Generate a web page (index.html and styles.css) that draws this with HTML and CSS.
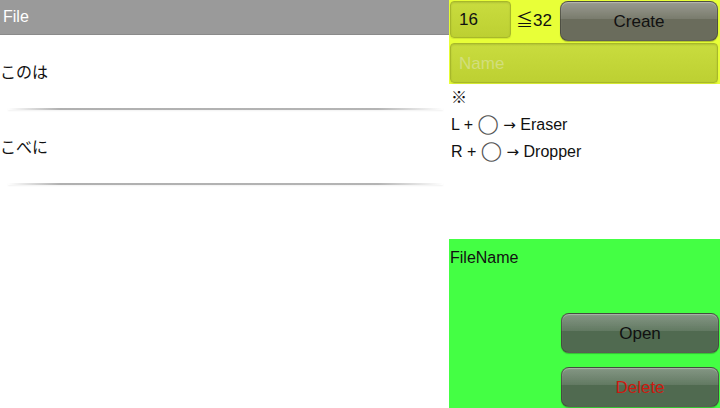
FILE: index.html
```html
<!DOCTYPE html>
<html>
<head>
<meta charset="utf-8">
<link rel="stylesheet" href="styles.css">
</head>
<body>
<div class="app">
  <div class="left">
    <div class="header">File</div>
    <div class="row"><span>このは</span></div>
    <div class="row"><span>こべに</span></div>
  </div>
  <div class="right">
    <div class="yellow">
      <div class="top">
        <div class="field size">16</div>
        <div class="limit">≦32</div>
        <div class="btn create">Create</div>
      </div>
      <div class="field name">Name</div>
    </div>
    <div class="help">
      <div class="line">※</div>
      <div class="line">L + <span class="sym">◯</span> <span class="arr">→</span> Eraser</div>
      <div class="line">R + <span class="sym">◯</span> <span class="arr">→</span> Dropper</div>
    </div>
    <div class="green">
      <div class="fname">FileName</div>
      <div class="actions">
        <div class="btn open">Open</div>
        <div class="btn delete">Delete</div>
      </div>
    </div>
  </div>
</div>
</body>
</html>
```
FILE: styles.css
```css
html, body {
  margin: 0;
  padding: 0;
  background: #fff;
}
body {
  font-family: "Liberation Sans", "Noto Sans CJK JP", sans-serif;
  font-size: 16px;
  color: #111;
}
.app {
  display: grid;
  grid-template-columns: 449px 271px;
  width: 720px;
  height: 408px;
  overflow: hidden;
}
.left {
  display: flex;
  flex-direction: column;
}
.header {
  height: 34px;
  background: #9a9a9a;
  border-bottom: 1px solid #8a8a8a;
  color: #fff;
  font-size: 16px;
  line-height: 34px;
  padding-left: 3px;
}
.row {
  height: 75px;
  display: flex;
  align-items: center;
  position: relative;
  font-size: 16px;
  padding-bottom: 3px;
  box-sizing: border-box;
}
.row::after {
  content: "";
  position: absolute;
  left: 8px;
  right: 6px;
  bottom: 0;
  height: 2px;
  background: linear-gradient(90deg, rgba(170,170,170,0), #b0b0b0 12%, #b4b4b4 85%, rgba(170,170,170,0));
  box-shadow: 0 1px 2px rgba(0,0,0,0.06);
}
.right {
  display: flex;
  flex-direction: column;
}
.yellow {
  background: #e8ff38;
  height: 84px;
  box-sizing: border-box;
  padding: 1px 2px 0 1px;
  display: flex;
  flex-direction: column;
  gap: 3px;
}
.top {
  display: flex;
  align-items: flex-start;
  height: 39px;
}
.field {
  background: linear-gradient(#c9dc3e, #bdd032);
  border: 1px solid #a8b82a;
  border-radius: 4px;
  box-shadow: inset 0 1px 2px rgba(0,0,0,0.12), 0 1px 1px rgba(0,0,0,0.1);
  box-sizing: border-box;
}
.size {
  width: 61px;
  height: 37px;
  line-height: 36px;
  padding-left: 8px;
  font-size: 17px;
}
.limit {
  font-size: 17px;
  line-height: 40px;
  margin-left: 5px;
  width: 44px;
}
.btn {
  box-sizing: border-box;
  width: 158px;
  height: 40px;
  border-radius: 8px;
  text-align: center;
  line-height: 39px;
  font-size: 17px;
  color: #111;
  border: 1px solid rgba(60,60,50,0.6);
  box-shadow: inset 0 1px 1px rgba(255,255,255,0.3), 0 1px 1px rgba(0,0,0,0.25);
}
.create {
  background:
    linear-gradient(rgba(255,255,255,0.32), rgba(255,255,255,0.1) 45%, rgba(255,255,255,0) 46%),
    #6a6c5c;
}
.name {
  height: 40px;
  width: 268px;
  line-height: 40px;
  padding-left: 8px;
  color: #d2de7c;
  font-size: 17px;
}
.help {
  height: 155px;
  box-sizing: border-box;
  padding: 0 0 0 2px;
  font-size: 16px;
}
.line {
  height: 27px;
  line-height: 27px;
  white-space: nowrap;
}
.sym {
  font-family: "DejaVu Sans", sans-serif;
  font-size: 19px;
  line-height: 0;
  color: #555;
  display: inline-block;
}
.arr {
  font-family: "DejaVu Sans", sans-serif;
  font-size: 15px;
  line-height: 0;
}
.green {
  background: #44ff44;
  flex: 1;
  display: flex;
  flex-direction: column;
  padding-left: 1px;
}
.fname {
  font-size: 16px;
  margin-top: 9px;
  line-height: 20px;
}
.actions {
  margin-top: auto;
  display: flex;
  flex-direction: column;
  align-items: flex-end;
  gap: 14px;
  padding-right: 1px;
  margin-bottom: 1px;
}
.open, .delete {
  background:
    linear-gradient(rgba(255,255,255,0.3), rgba(255,255,255,0.1) 45%, rgba(255,255,255,0) 46%),
    #506a50;
}
.delete {
  color: #cc1a10;
}
```
